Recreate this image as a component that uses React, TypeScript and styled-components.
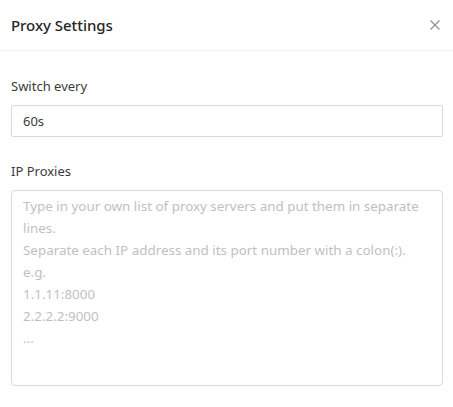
import React from "react";
import styled, { createGlobalStyle } from "styled-components";

const Global = createGlobalStyle`
  html, body { margin: 0; padding: 0; background: #fff; }
  body { font-family: "Noto Sans", "Open Sans", sans-serif; }
  * { box-sizing: border-box; }
`;

const Panel = styled.div`
  width: 453px;
  height: 407px;
  background: #fff;
  display: flex;
  flex-direction: column;
`;

const Header = styled.div`
  height: 51px;
  padding: 0 10px 1px 11px;
  display: flex;
  align-items: center;
  justify-content: space-between;
  border-bottom: 1px solid #f0f0f0;
`;

const Title = styled.h1`
  margin: 0;
  font-size: 15px;
  font-weight: 500;
  color: #262626;
  letter-spacing: -0.05px;
`;

const Close = styled.button`
  border: 0;
  background: none;
  padding: 0;
  width: 16px;
  height: 16px;
  display: flex;
  align-items: center;
  justify-content: center;
  cursor: pointer;
  color: #8c8c8c;
`;

const Body = styled.div`
  padding: 25px 10px 0 11px;
  display: flex;
  flex-direction: column;
`;

const Field = styled.div<{ $gap?: number }>`
  display: flex;
  flex-direction: column;
  gap: 9px;
  margin-bottom: ${(p) => p.$gap ?? 0}px;
`;

const Label = styled.label`
  font-size: 13px;
  line-height: 20px;
  color: #3a3a3a;
`;

const Input = styled.input`
  width: 432px;
  height: 32px;
  border: 1px solid #d9d9d9;
  border-radius: 2px;
  padding: 4px 11px;
  font-family: inherit;
  font-size: 13px;
  color: #3a3a3a;
  outline: none;
`;

const TextArea = styled.textarea`
  width: 432px;
  height: 196px;
  border: 1px solid #d9d9d9;
  border-radius: 4px;
  padding: 4px 11px;
  font-family: inherit;
  font-size: 13.4px;
  line-height: 22px;
  color: #333;
  resize: none;
  outline: none;
  &::placeholder {
    color: #bfbfbf;
  }
`;

const placeholder =
  "Type in your own list of proxy servers and put them in separate lines.\nSeparate each IP address and its port number with a colon(:).\ne.g.\n1.1.11:8000\n2.2.2.2:9000\n...";

export default function App() {
  return (
    <Panel>
      <Global />
      <Header>
        <Title>Proxy Settings</Title>
        <Close aria-label="Close">
          <svg width="10" height="10" viewBox="0 0 10 10">
            <path d="M0.5 0.5 L9.5 9.5 M9.5 0.5 L0.5 9.5" stroke="currentColor" strokeWidth="1.1" fill="none" />
          </svg>
        </Close>
      </Header>
      <Body>
        <Field $gap={24}>
          <Label>Switch every</Label>
          <Input defaultValue="60s" />
        </Field>
        <Field>
          <Label>IP Proxies</Label>
          <TextArea placeholder={placeholder} />
        </Field>
      </Body>
    </Panel>
  );
}
